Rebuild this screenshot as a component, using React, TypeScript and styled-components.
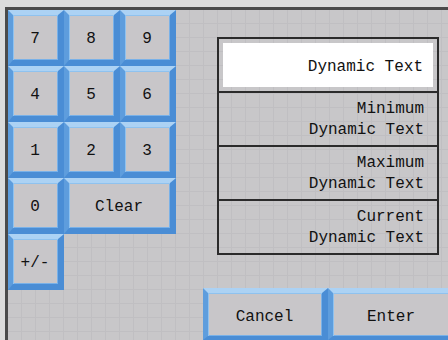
import React from "react";
import styled, { createGlobalStyle } from "styled-components";

const Global = createGlobalStyle`
  html, body {
    margin: 0;
    padding: 0;
    width: 448px;
    height: 340px;
    overflow: hidden;
    background: #dcdcdc;
  }
  #root { width: 448px; height: 340px; overflow: hidden; }
  * { box-sizing: border-box; }
`;

const Frame = styled.div`
  margin: 7px 0 0 5px;
  width: 443px;
  height: 333px;
  border-top: 3px solid #4b4b4b;
  border-left: 3px solid #4b4b4b;
  background-color: #c8c7c9;
  background-image:
    linear-gradient(to right, transparent 13px, #c0bfc2 13px, #c0bfc2 14px),
    linear-gradient(to bottom, transparent 13px, #c0bfc2 13px, #c0bfc2 14px);
  background-size: 14px 14px;
  display: flex;
  overflow: hidden;
  font-family: "Liberation Mono", "DejaVu Sans Mono", monospace;
  font-size: 16px;
  color: #111;
`;

const Keypad = styled.div`
  flex: none;
  display: grid;
  grid-template-columns: repeat(3, 56px);
  grid-auto-rows: 56px;
  align-content: start;
`;

const Key = styled.button<{ $span?: number }>`
  grid-column: span ${(p) => p.$span ?? 1};
  margin: 0;
  padding: 3px 1px 0 0;
  font: inherit;
  color: inherit;
  background: #c8c6c9;
  border-style: solid;
  border-width: 5px 6px 6px 5px;
  border-color: #acd2f4 #4a8dd5 #4a8dd5 #5e9ddd;
  box-shadow: inset 1px 1px 0 #8fc2ef, inset -1px -1px 0 #79b1e8;
  display: flex;
  align-items: center;
  justify-content: center;
  cursor: pointer;
`;

const RightColumn = styled.div`
  flex: 1;
  min-width: 0;
  display: flex;
  flex-direction: column;
`;

const Panel = styled.div`
  margin: 27px 0 0 41px;
  width: 222px;
  border: 2px solid #2b2b2b;
  display: flex;
  flex-direction: column;
`;

const Row = styled.div`
  height: 54px;
  border-top: 2px solid #2b2b2b;
  display: flex;
  flex-direction: column;
  align-items: flex-end;
  justify-content: center;
  padding: 1px 13px 0 0;
  line-height: 21px;
  text-align: right;
  white-space: nowrap;
`;

const FieldRow = styled.div`
  height: 52px;
  padding: 4px;
  display: flex;
`;

const Field = styled.div`
  flex: 1;
  background: #fff;
  display: flex;
  align-items: center;
  justify-content: flex-end;
  padding: 3px 10px 0 0;
  white-space: nowrap;
`;

const Actions = styled.div`
  margin: auto 0 0 27px;
  display: flex;
`;

const ActionKey = styled(Key)<{ $w: number }>`
  width: ${(p) => p.$w}px;
  height: 52px;
  flex: none;
  border-bottom-width: 4px;
  padding-top: 4px;
`;

export default function App() {
  const digits = ["7", "8", "9", "4", "5", "6", "1", "2", "3"];
  const rows = [
    ["Minimum", "Dynamic Text"],
    ["Maximum", "Dynamic Text"],
    ["Current", "Dynamic Text"],
  ];
  return (
    <>
      <Global />
      <Frame>
        <Keypad>
          {digits.map((d) => (
            <Key key={d}>{d}</Key>
          ))}
          <Key>0</Key>
          <Key $span={2}>Clear</Key>
          <Key>+/-</Key>
        </Keypad>
        <RightColumn>
          <Panel>
            <FieldRow>
              <Field>Dynamic Text</Field>
            </FieldRow>
            {rows.map(([a, b]) => (
              <Row key={a}>
                <span>{a}</span>
                <span>{b}</span>
              </Row>
            ))}
          </Panel>
          <Actions>
            <ActionKey $w={125}>Cancel</ActionKey>
            <ActionKey $w={128}>Enter</ActionKey>
          </Actions>
        </RightColumn>
      </Frame>
    </>
  );
}
